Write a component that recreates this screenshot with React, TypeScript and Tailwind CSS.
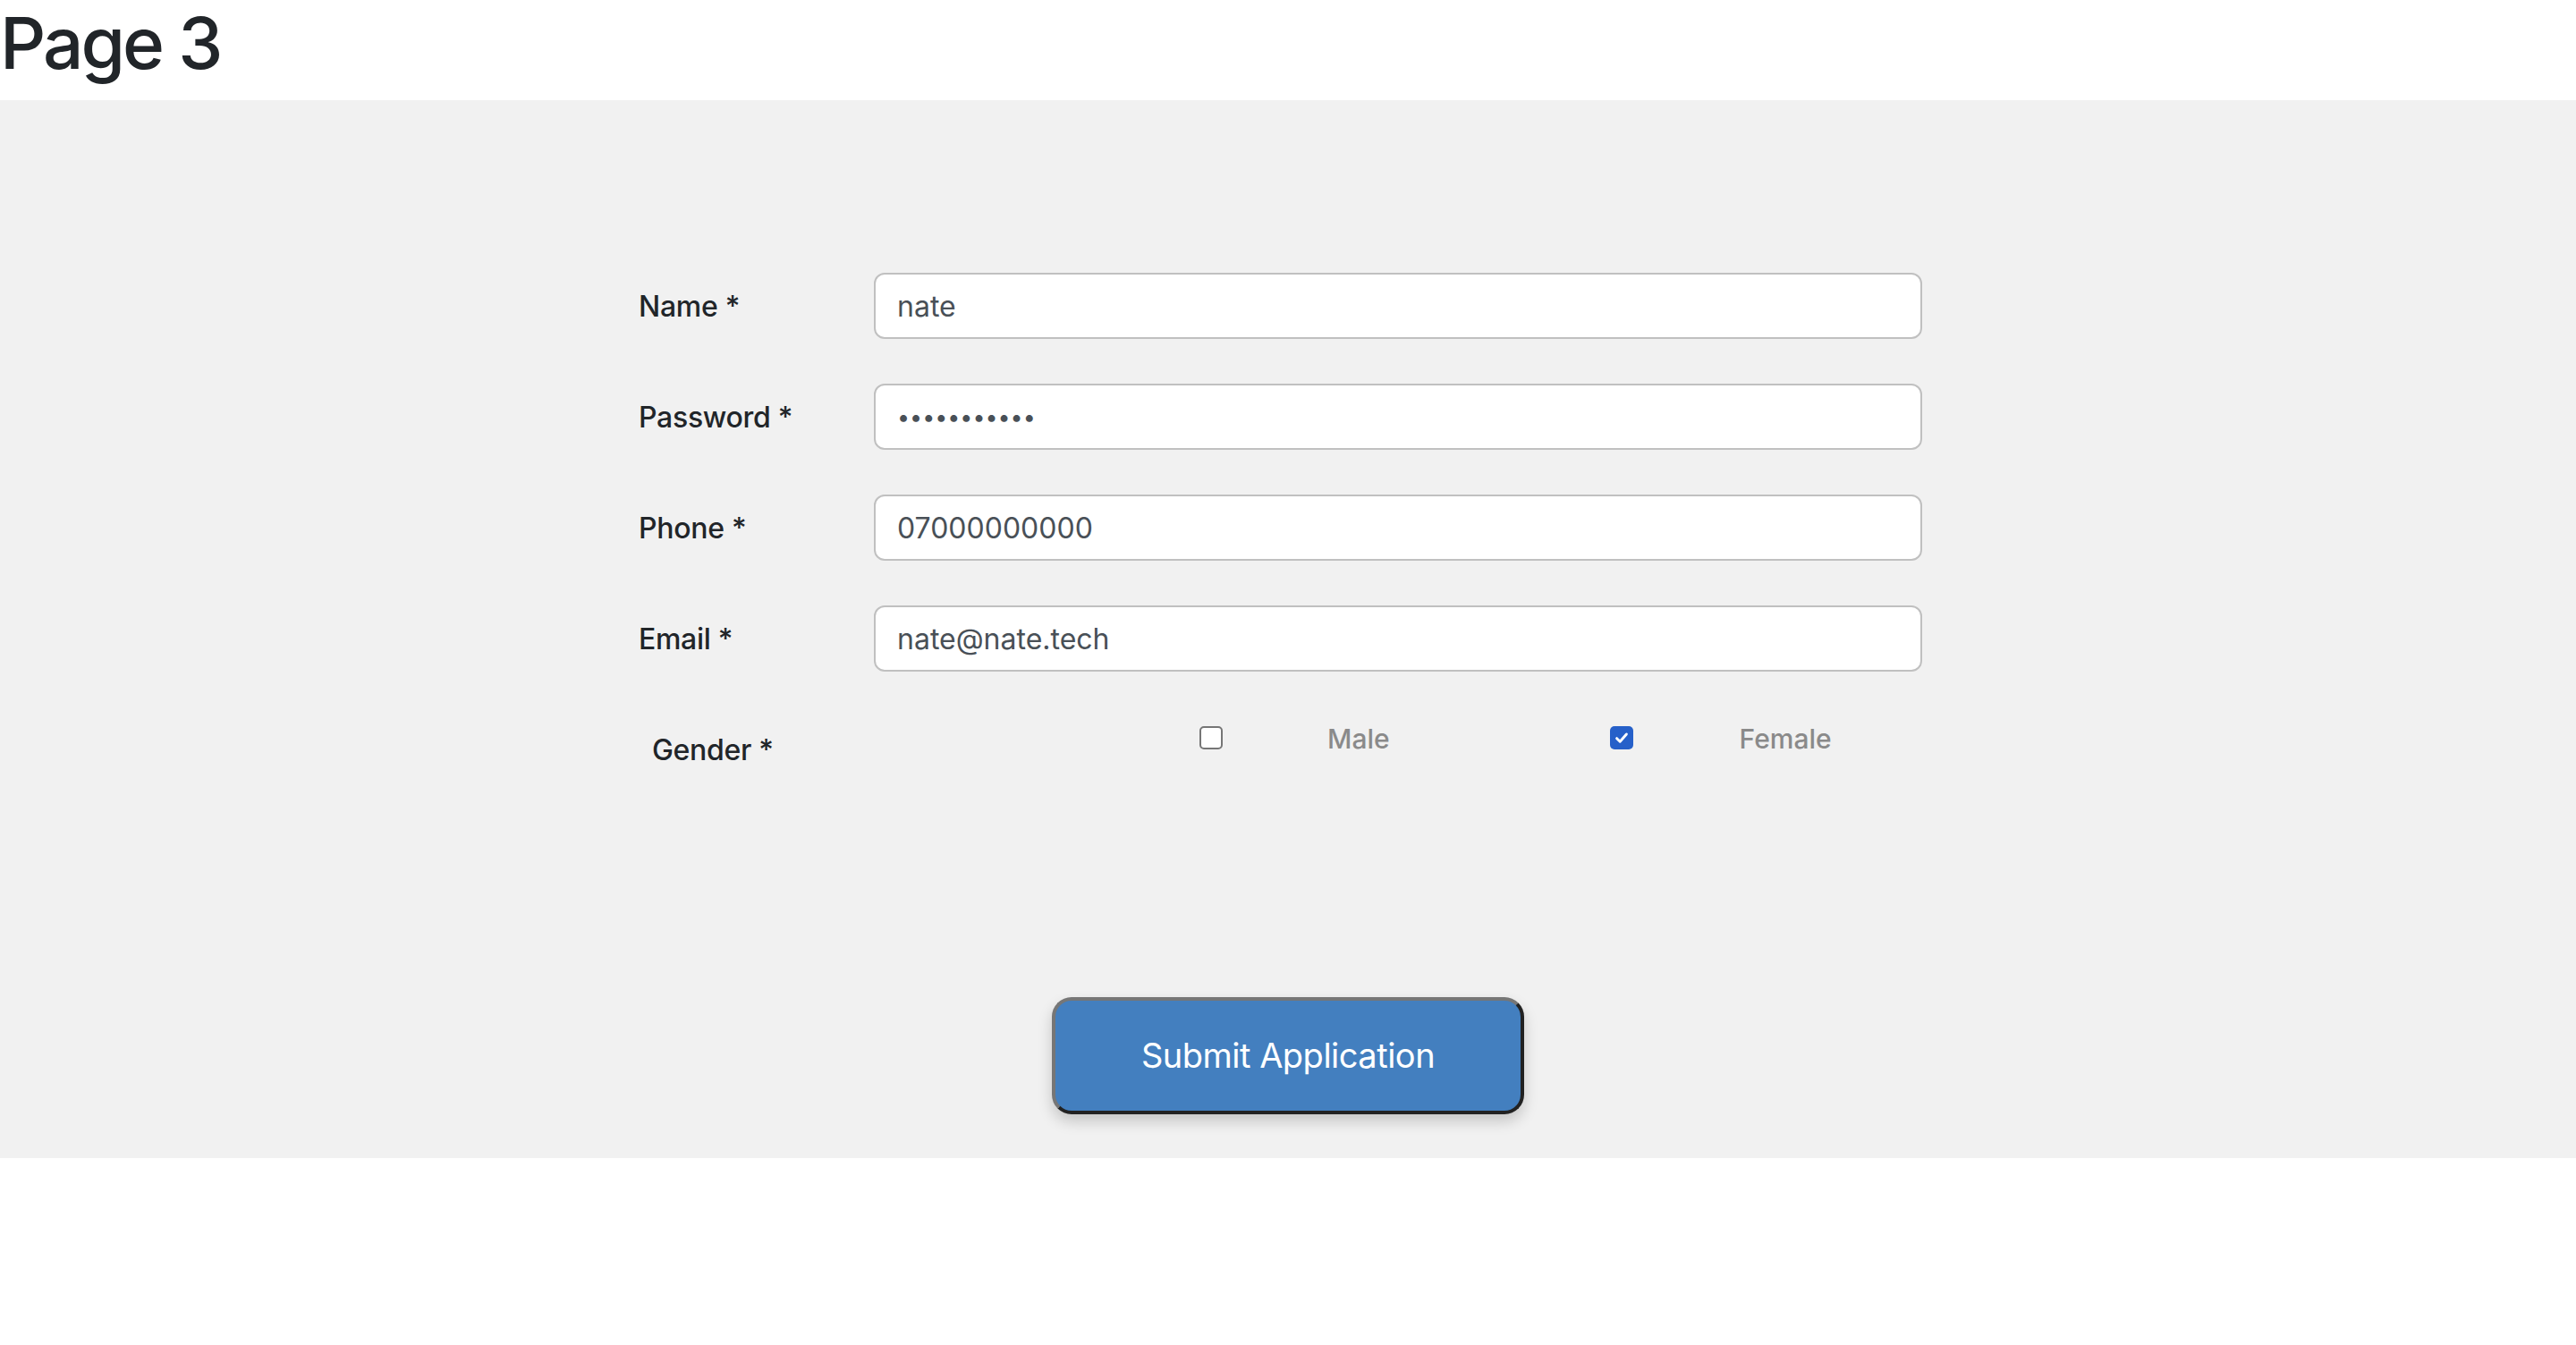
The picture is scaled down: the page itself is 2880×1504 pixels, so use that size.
import React from 'react';

const fields = [
  { label: 'Name *', type: 'text', value: 'nate' },
  { label: 'Password *', type: 'password', value: 'nate1234567' },
  { label: 'Phone *', type: 'tel', value: '07000000000' },
  { label: 'Email *', type: 'email', value: 'nate@nate.tech' },
];

const Check = ({ checked }: { checked: boolean }) =>
  checked ? (
    <span className="mt-[4px] flex h-[26px] w-[26px] items-center justify-center rounded-[5px] bg-[#2660c9]">
      <svg viewBox="0 0 16 16" className="h-[18px] w-[18px]">
        <path d="M3.2 8.6 6.4 11.8 12.8 4.4" fill="none" stroke="#fff" strokeWidth="2.6" strokeLinecap="round" strokeLinejoin="round" />
      </svg>
    </span>
  ) : (
    <span className="mt-[4px] block h-[26px] w-[26px] rounded-[5px] border-2 border-[#767676] bg-white" />
  );

export default function App() {
  return (
    <div className="min-h-screen bg-white font-['Inter',sans-serif] text-[#212529]">
      <h1 className="mb-[16px] text-[80px] font-medium leading-[1.2] tracking-[-3px]">Page 3</h1>

      <div className="bg-[#f1f1f1] pb-[49px] pt-[193px]">
        <form className="ml-[714px] w-[1435px]" onSubmit={(e) => e.preventDefault()}>
          <div className="flex flex-col gap-[50px]">
            {fields.map((f) => (
              <div key={f.label} className="flex items-center">
                <label className="w-[263px] text-[32px] font-medium leading-[normal] tracking-[-0.3px]">{f.label}</label>
                <input
                  type={f.type}
                  defaultValue={f.value}
                  className={
                    'h-[74px] w-[1172px] rounded-[12px] border-2 border-[#c0c0c0] bg-white px-[24px] text-[#495057] outline-none ' +
                    (f.type === 'password' ? 'text-[25px]' : 'text-[32px]')
                  }
                />
              </div>
            ))}
          </div>

          {/* Gender */}
          <div className="mt-[57px] flex items-start">
            <span className="ml-[15px] mt-[11px] w-[612px] text-[32px] font-medium leading-[normal] tracking-[-0.3px]">Gender *</span>
            <Check checked={false} />
            <span className="ml-[117px] text-[30px] font-medium leading-[normal] text-[#8a8a8a]">Male</span>
            <span className="ml-[246px]">
              <Check checked={true} />
            </span>
            <span className="ml-[119px] text-[30px] font-medium leading-[normal] text-[#8a8a8a]">Female</span>
          </div>
        </form>

        <div className="mt-[257px] flex justify-center">
          <button
            type="submit"
            className="h-[131px] w-[528px] rounded-[22px] border-4 border-b-[#222] border-l-[#767676] border-r-[#222] border-t-[#767676] bg-[#437fbf] text-[38px] font-normal tracking-[-0.5px] text-white shadow-[0_8px_16px_rgba(0,0,0,0.18)]"
          >
            Submit Application
          </button>
        </div>
      </div>
    </div>
  );
}
